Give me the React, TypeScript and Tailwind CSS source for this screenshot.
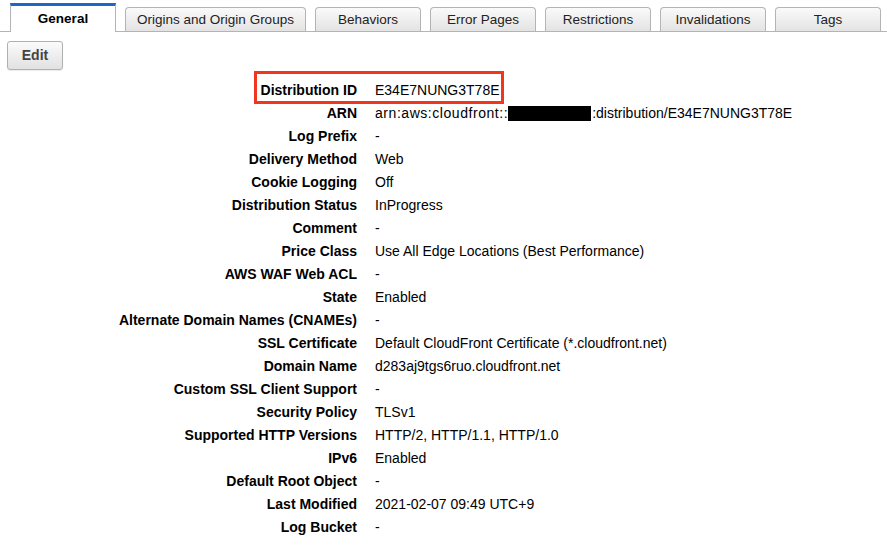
import React from "react"

const tabs = [
  { name: "General", w: "w-[106px]", active: true },
  { name: "Origins and Origin Groups", w: "w-[181px]" },
  { name: "Behaviors", w: "w-[106px]" },
  { name: "Error Pages", w: "w-[106px]" },
  { name: "Restrictions", w: "w-[106px]" },
  { name: "Invalidations", w: "w-[106px]" },
  { name: "Tags", w: "w-[106px]" },
]

const rows: [string, React.ReactNode][] = [
  ["Distribution ID", "E34E7NUNG3T78E"],
  [
    "ARN",
    <>
      <span className="tracking-[0.55px]">arn:aws:cloudfront::</span>
      <span className="mr-px inline-block h-[15px] w-[83px] bg-black align-[-3px]" />
      :distribution/E34E7NUNG3T78E
    </>,
  ],
  ["Log Prefix", "-"],
  ["Delivery Method", "Web"],
  ["Cookie Logging", "Off"],
  ["Distribution Status", "InProgress"],
  ["Comment", "-"],
  ["Price Class", "Use All Edge Locations (Best Performance)"],
  ["AWS WAF Web ACL", "-"],
  ["State", "Enabled"],
  ["Alternate Domain Names (CNAMEs)", "-"],
  ["SSL Certificate", "Default CloudFront Certificate (*.cloudfront.net)"],
  ["Domain Name", "d283aj9tgs6ruo.cloudfront.net"],
  ["Custom SSL Client Support", "-"],
  ["Security Policy", "TLSv1"],
  ["Supported HTTP Versions", "HTTP/2, HTTP/1.1, HTTP/1.0"],
  ["IPv6", "Enabled"],
  ["Default Root Object", "-"],
  ["Last Modified", "2021-02-07 09:49 UTC+9"],
  ["Log Bucket", "-"],
]

export default function App() {
  return (
    <div className="relative min-h-screen bg-white font-['Liberation_Sans',Arial,sans-serif] text-[14px] text-black">
      {/* tab strip */}
      <div className="flex h-[32px] items-end gap-[9px] border-b border-[#b4b4b4] pl-[10px] text-[13.5px]">
        {tabs.map((t) =>
          t.active ? (
            <div
              key={t.name}
              className={`${t.w} -mb-px flex h-[29px] items-center justify-center border-x border-t-[3px] border-x-[#b4b4b4] border-t-[#1f66c7] bg-white pt-px font-bold text-black`}
            >
              {t.name}
            </div>
          ) : (
            <div
              key={t.name}
              className={`${t.w} flex h-[24px] items-center justify-center rounded-t-[4px] border border-b-0 border-[#b4b4b4] bg-gradient-to-b from-[#fafafa] to-[#e3e3e3] pt-[2px] text-[#222]`}
            >
              {t.name}
            </div>
          )
        )}
      </div>

      <div className="pl-[7px] pt-[9px]">
        <button className="h-[29px] w-[56px] rounded-[3px] border border-[#b0b0b0] bg-gradient-to-b from-[#fbfbfb] to-[#e1e1e1] font-bold text-[#444] shadow-[0_1px_1px_rgba(0,0,0,0.08)]">
          Edit
        </button>
      </div>

      <div className="mt-[9px] grid grid-cols-[357px_1fr] gap-x-[18px] leading-[23px]">
        {rows.map(([label, value]) => (
          <React.Fragment key={label}>
            <div className="text-right font-bold">{label}</div>
            <div className="whitespace-nowrap">{value}</div>
          </React.Fragment>
        ))}
      </div>

      {/* highlight annotation */}
      <div className="pointer-events-none absolute left-[254px] top-[71px] h-[33px] w-[250px] border-[3px] border-[#f0361f]" />
    </div>
  )
}
